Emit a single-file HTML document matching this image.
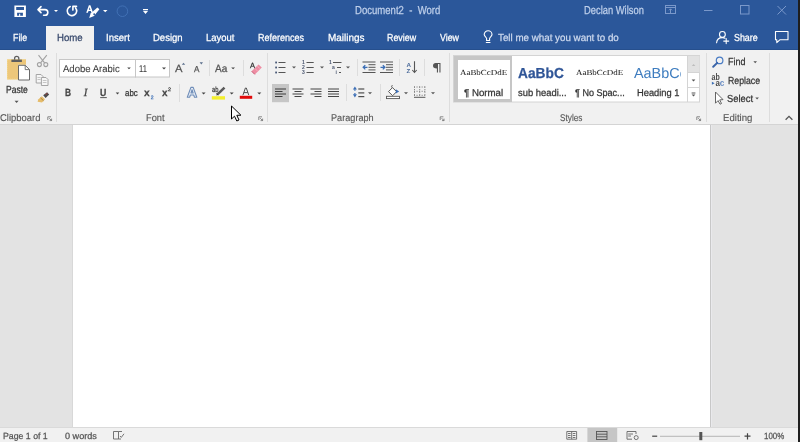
<!DOCTYPE html>
<html><head><meta charset="utf-8"><style>
html,body{margin:0;padding:0;width:800px;height:442px;overflow:hidden;background:#E3E3E3;font-family:"Liberation Sans",sans-serif}
.b{position:absolute}
.t{position:absolute;white-space:pre;transform-origin:0 0;text-rendering:geometricPrecision}
svg{position:absolute;left:0;top:0;will-change:transform}
</style></head><body>
<div class="b" style="left:0;top:0;width:800px;height:50px;background:#2B579A"></div>
<div class="b" style="left:0;top:49px;width:800px;height:1px;background:#264F8D"></div>
<div class="b" style="left:46px;top:26px;width:48px;height:24px;background:#F1F1F1"></div>
<div class="b" style="left:0;top:50px;width:800px;height:74px;background:#F1F1F1"></div>
<div class="b" style="left:0;top:124px;width:800px;height:1px;background:#D4D4D4"></div>
<div class="b" style="left:0;top:125px;width:800px;height:302px;background:#E3E3E3"></div>
<div class="b" style="left:73px;top:125px;width:637px;height:302px;background:#FFFFFF"></div>
<div class="b" style="left:72px;top:125px;width:1px;height:302px;background:#D8D8D8"></div>
<div class="b" style="left:710px;top:125px;width:1px;height:302px;background:#C8C8C8"></div>
<div class="b" style="left:711px;top:125px;width:1px;height:302px;background:#E9E9EC"></div>
<div class="b" style="left:0;top:427px;width:800px;height:15px;background:#F1F1F1"></div>
<div class="b" style="left:0;top:427px;width:800px;height:1px;background:#DADADA"></div>
<div class="b" style="left:798px;top:0;width:2px;height:442px;background:#1E1E1E"></div>
<svg width="800" height="442" viewBox="0 0 800 442" shape-rendering="geometricPrecision">
<!-- ===== Title bar ===== -->
<g fill="#FFFFFF">
 <path d="M14.4 5.5H25.9V17H14.4z M16.2 6.9V10.1H24V6.9z M17.1 12.8V15.7H19.1V13.8H20.2V15.7H22.9V12.8z" fill-rule="evenodd"/>
</g>
<g fill="none" stroke="#FFFFFF" stroke-width="1.6" stroke-linecap="round" stroke-linejoin="round">
 <path d="M41 6.6 L38 9.6 L41 12.6 M38.3 9.6 H45 A2.8 2.8 0 0 1 45 15.2 H43.6"/>
 <path d="M72.9 10.1 V6.4 H76.5"/>
 <path d="M75.6 7.9 A4.7 4.7 0 1 1 70.2 6.5" />
</g>
<path d="M54 10h4l-2 2z M103 10h4.5l-2.25 2.2z" fill="#FFFFFF"/>
<!-- A with brush -->
<path d="M86.2 12.8 L88.9 5.3 H90.4 L93.1 12.8 H91.4 L90.8 11 H88.5 L87.9 12.8z M88.9 9.7 H90.4 L89.65 7.3z" fill="#FFFFFF" fill-rule="evenodd"/>
<path d="M97.4 7.4 L99.4 9.3 L94 16 L89.2 18 L90.6 13.4z" fill="#FFFFFF"/>
<circle cx="94.2" cy="14.2" r="0.95" fill="#2B579A"/>
<circle cx="122.4" cy="11.2" r="5.3" fill="none" stroke="#4474B8" stroke-width="0.9"/>
<path d="M143 9h5v1.2h-5z M143 11h5l-2.5 2.9z" fill="#FFFFFF"/>
<!-- right controls -->
<g fill="none" stroke="#7A98CA" stroke-width="1">
 <rect x="665.5" y="5.5" width="10" height="8"/>
 <path d="M665.5 7.5 H675.5 M670.5 13 V9 M669 10.3 L670.5 8.8 L672 10.3"/>
 <path d="M704 10.5 H712.5"/>
 <rect x="740.5" y="5.5" width="8.5" height="8.5"/>
 <path d="M777.5 6 L786 14.5 M786 6 L777.5 14.5"/>
</g>
<!-- tab bar icons -->
<g fill="none" stroke="#FFFFFF" stroke-width="1.1" stroke-linecap="round">
 <path d="M486.6 40.5 V38.6 C486.6 37.3 484.2 36.3 484.2 34.6 A3.9 3.9 0 0 1 492 34.6 C492 36.3 489.6 37.3 489.6 38.6 V40.5 Z"/>
 <path d="M486.3 42.5 H490"/>
 <circle cx="722.4" cy="34.4" r="2.9"/>
 <path d="M716.6 42.8 C716.8 39.5 719.2 37.6 722.4 37.6 C723.4 37.6 724.3 37.8 725 38.2"/>
 <path d="M726.2 38.6 V43.6 M723.7 41.1 H728.7"/>
 <path d="M775.5 31.5 H788 V39.8 H779.8 L776.8 42.6 V39.8 H775.5 Z" stroke-linejoin="round"/>
</g>

<!-- ===== Ribbon separators ===== -->
<g fill="#DDDDDD">
 <rect x="56" y="53" width="1" height="69"/>
 <rect x="267" y="53" width="1" height="69"/>
 <rect x="449" y="53" width="1" height="69"/>
 <rect x="706" y="53" width="1" height="69"/>
 <rect x="769" y="53" width="1" height="69"/>
 <rect x="209" y="60" width="1" height="16"/>
 <rect x="243" y="60" width="1" height="16"/>
 <rect x="179" y="84" width="1" height="18"/>
 <rect x="357" y="59" width="1" height="17"/>
 <rect x="399" y="59" width="1" height="17"/>
 <rect x="424" y="59" width="1" height="17"/>
 <rect x="346" y="84" width="1" height="17"/>
 <rect x="380" y="84" width="1" height="17"/>
</g>

<!-- ===== Clipboard ===== -->
<path d="M7 59.2 H26 V64.8 H18 V79.6 H7 Z" fill="#EDC77A"/>
<path d="M7.5 59.7 H25.5 M7.5 59.7 V79.2 H18" fill="none" stroke="#F6DF9A" stroke-width="0.8" stroke-dasharray="1 1"/>
<path d="M11.4 59.6 H21.9 V62 H11.4 Z" fill="#5F5F5F"/>
<path d="M14.6 59.8 V58.4 A2.1 2.1 0 0 1 18.8 58.4 V59.8" fill="none" stroke="#5F5F5F" stroke-width="1.3"/>
<path d="M18.5 65.3 H25.2 L29.5 69.6 V80 H18.5 Z" fill="#FFFFFF" stroke="#6A6A6A" stroke-width="1"/>
<path d="M25.2 65.3 V69.6 H29.5" fill="none" stroke="#6A6A6A" stroke-width="0.9"/>
<path d="M14.6 100.8 H18.6 L16.6 102.9z" fill="#555555"/>
<!-- scissors -->
<g fill="none" stroke="#A2A2A2" stroke-width="1.1">
 <path d="M38.5 55.2 L44.6 62.8 M46.8 55.2 L40.6 62.8"/>
 <circle cx="39.4" cy="64.6" r="2"/>
 <circle cx="45.8" cy="64.6" r="2"/>
</g>
<!-- copy -->
<g fill="#F6F6F6" stroke="#9C9C9C" stroke-width="0.9">
 <path d="M36.2 74.5 H41 L43 76.5 V83 H36.2 Z"/>
 <path d="M41.4 77.5 H46 L48 79.5 V85.5 H41.4 Z"/>
</g>
<g stroke="#B0B0B0" stroke-width="0.7"><path d="M37.5 77.5 H40.5 M37.5 79.5 H40.5 M42.8 80.5 H46.5 M42.8 82.5 H46.5"/></g>
<!-- format brush -->
<path d="M43.2 95.2 L47 92.2 L49.2 94.6 L45.6 98 Z" fill="#4A4A4A"/>
<path d="M41.8 96.2 L45 99.2 L42 102.6 L37.6 101.8 L38.2 99.6 Z" fill="#E6BC6A"/>
<path d="M40.5 97.8 L43.6 100.8" stroke="#9C7A3A" stroke-width="0.8"/>
<path d="M45.5 94.6 L47.4 93.4" stroke="#B04040" stroke-width="0.9"/>

<!-- ===== Font group ===== -->
<rect x="59.5" y="59.5" width="76" height="17.5" fill="#FFFFFF" stroke="#C6C6C6" stroke-width="1"/>
<rect x="135.5" y="59.5" width="34" height="17.5" fill="#FFFFFF" stroke="#C6C6C6" stroke-width="1"/>
<path d="M127.2 67.4 h3.6 l-1.8 1.9z M162 67.4 h4 l-2 2z M231.2 67.4 h3.8 l-1.9 1.9z" fill="#444444"/>
<path d="M181.8 64.8 L183.5 62.8 L185.2 64.8z" fill="#5B6F8C"/>
<path d="M199.6 62.3 H203 L201.3 64.4z" fill="#5B6F8C"/>
<path d="M115.7 92.6 h3.6 l-1.8 1.9z M201.6 92.6 h4 l-2 1.9z M229.7 92.6 h4 l-2 1.9z M257.3 92.6 h4 l-2 1.9z" fill="#444444"/>
<rect x="100.2" y="97.2" width="6.6" height="0.9" fill="#444444"/>
<!-- clear formatting -->
<path d="M251.6 71.2 L258.6 64.4 L261.8 67.6 L254.8 74.4 Z" fill="#EE8CA2"/>
<path d="M251.6 71.2 L254.8 74.4" stroke="#C45C78" stroke-width="1"/>
<path d="M255 68.5 L257.5 71 M257.4 66.2 L259.9 68.7" stroke="#F6C2CE" stroke-width="0.7"/>
<!-- text effects -->
<path d="M187.3 97.3 L190.9 87.4 H193.2 L196.8 97.3 H194.5 L193.7 95 H190.4 L189.6 97.3 Z M191 93 H193.1 L192 89.8 Z" fill="#E8EEF6" stroke="#6F8DB8" stroke-width="1.1" fill-rule="evenodd" stroke-linejoin="round"/>
<!-- highlight -->
<path d="M223.6 86.8 L225.4 88.6 L218.6 95 L216.2 95.6 L216.8 93.2 Z" fill="#5A5A5A"/>
<path d="M216.6 93.6 L218.2 95.2" stroke="#333333" stroke-width="1"/>
<rect x="211.8" y="96.2" width="13.2" height="3.4" fill="#F2EE2E"/>
<!-- font color -->
<path d="M242.9 95.2 L245.4 88 H246.3 L248.8 95.2 M243.9 92.6 H247.8" fill="none" stroke="#505050" stroke-width="1"/>
<rect x="239.8" y="95.8" width="12.4" height="3" fill="#E00A0A"/>

<!-- ===== Paragraph group ===== -->
<g fill="#555555">
 <!-- bullets -->
 <rect x="275.2" y="61.6" width="1.8" height="1.8" fill="#4A5A78"/><rect x="275.2" y="66.6" width="1.8" height="1.8" fill="#4A5A78"/><rect x="275.2" y="71.6" width="1.8" height="1.8" fill="#4A5A78"/>
 <rect x="278.5" y="62" width="7" height="1"/><rect x="278.5" y="67" width="7" height="1"/><rect x="278.5" y="72" width="7" height="1"/>
 <path d="M292 66.6 h4 l-2 2z M320 66.6 h4 l-2 2z M346 66.6 h4 l-2 2z M368 92.2 h4 l-2 2z M404 92.2 h4 l-2 2z M431 92.2 h4 l-2 2z"/>
 <!-- numbering -->
 <rect x="306.5" y="62" width="7.2" height="1"/><rect x="306.5" y="67" width="7.2" height="1"/><rect x="306.5" y="72" width="7.2" height="1"/>
 <!-- multilevel -->
 <rect x="333" y="62" width="8.5" height="1"/><rect x="337" y="67" width="4" height="1"/><rect x="339" y="72" width="2" height="1"/>
</g>
<g fill="#4A5670" font-family="Liberation Sans" font-size="5" font-weight="700">
 <text x="302" y="64.4">1</text><text x="302" y="69.4">2</text><text x="302" y="74.4">3</text>
 <text x="329" y="64.4">1</text><text x="332" y="69.4">a</text><text x="335.5" y="74.4">i</text>
</g>
<!-- align selected bg -->
<rect x="272" y="84" width="17" height="18.2" fill="#C6C6C6"/>
<g fill="#3A3A3A">
 <rect x="275" y="88.5" width="11" height="1"/><rect x="275" y="91" width="7.5" height="1"/><rect x="275" y="93.5" width="11" height="1"/><rect x="275" y="96" width="7.5" height="1"/>
</g>
<g fill="#454545">
 <rect x="292.5" y="88.5" width="11" height="1"/><rect x="294.5" y="91" width="7" height="1"/><rect x="292.5" y="93.5" width="11" height="1"/><rect x="294.5" y="96" width="7" height="1"/>
 <rect x="310.5" y="88.5" width="11" height="1"/><rect x="314.5" y="91" width="7" height="1"/><rect x="310.5" y="93.5" width="11" height="1"/><rect x="314.5" y="96" width="7" height="1"/>
 <rect x="328" y="88.5" width="11" height="1"/><rect x="328" y="91" width="11" height="1"/><rect x="328" y="93.5" width="11" height="1"/><rect x="328" y="96" width="11" height="1"/>
</g>
<!-- indents -->
<g fill="#555555">
 <rect x="362.5" y="61.5" width="13" height="1"/><rect x="368.5" y="64.2" width="7" height="1"/><rect x="368.5" y="66.8" width="7" height="1"/><rect x="368.5" y="69.4" width="7" height="1"/><rect x="362.5" y="72" width="13" height="1"/>
 <rect x="380" y="61.5" width="13" height="1"/><rect x="386" y="64.2" width="7" height="1"/><rect x="386" y="66.8" width="7" height="1"/><rect x="386" y="69.4" width="7" height="1"/><rect x="380" y="72" width="13" height="1"/>
</g>
<g fill="none" stroke="#3C6FB6" stroke-width="1.3">
 <path d="M367.5 67.3 H363.3 M365.3 65.2 L363.2 67.3 L365.3 69.4"/>
 <path d="M380.5 67.3 H384.8 M382.8 65.2 L384.9 67.3 L382.8 69.4"/>
</g>
<!-- sort -->
<text x="406.5" y="67" font-family="Liberation Sans" font-size="6.2" font-weight="700" fill="#4A6A9A">A</text>
<text x="406.5" y="73.4" font-family="Liberation Sans" font-size="6.2" font-weight="700" fill="#4A6A9A">Z</text>
<path d="M414.5 61.2 V72.5 M412.3 70 L414.5 72.5 L416.7 70" fill="none" stroke="#555555" stroke-width="1.1"/>
<!-- pilcrow -->
<path d="M435.5 63 H440.5 V72.5 H439.4 V64.1 H438 V72.5 H436.9 V68.6 C434.2 68.6 433 67.5 433 65.8 C433 64 434.2 63 435.5 63 Z" fill="#555555"/>
<!-- line spacing -->
<g fill="#4E4E4E"><rect x="358.3" y="88.4" width="6" height="1.2"/><rect x="358.3" y="92.3" width="6" height="1.2"/><rect x="358.3" y="96" width="6" height="1.2"/></g>
<path d="M352.9 89.6 L354.9 86.6 L356.9 89.6z M352.9 94.2 L354.9 97.4 L356.9 94.2z" fill="#3C6FB6"/>
<rect x="354.3" y="89.2" width="1.2" height="1.6" fill="#3C6FB6"/><rect x="354.3" y="93" width="1.2" height="1.6" fill="#3C6FB6"/>
<!-- shading -->
<path d="M388.5 91.6 L392.5 87.6 L396.6 91.7 L392.6 95.7 Z" fill="#FFFFFF" stroke="#555555" stroke-width="1"/>
<path d="M392.3 87.8 C391 86.2 391.5 85.3 392.7 85.7" fill="none" stroke="#555555" stroke-width="0.9"/>
<path d="M395.8 89.2 L399.2 91.4 L395.8 93.6z" fill="#3C6FB6"/>
<rect x="386.5" y="96.3" width="13" height="2.3" fill="#FFFFFF" stroke="#555555" stroke-width="0.9"/>
<!-- borders -->
<g fill="none" stroke="#6A6A6A" stroke-width="0.9" stroke-dasharray="1 1.55">
 <path d="M414 87 H425.5 M414 91.3 H425.5 M414 95.3 H425.5"/>
 <path d="M414.5 86.6 V96 M419.7 86.6 V96 M424.9 86.6 V96"/>
</g>
<rect x="414" y="96.8" width="11.4" height="1" fill="#555555"/>
<!-- dialog launchers -->
<g fill="none" stroke="#6E6E6E" stroke-width="0.8">
 <path d="M47.8 120 V116.8 H51 M49.2 118.2 L51.6 120.6 M51.6 118.6 V120.6 H49.6"/>
 <path d="M258.8 120 V116.8 H262 M260.2 118.2 L262.6 120.6 M262.6 118.6 V120.6 H260.6"/>
 <path d="M440.2 120 V116.8 H443.4 M441.6 118.2 L444 120.6 M444 118.6 V120.6 H442"/>
 <path d="M696.8 120 V116.8 H700 M698.2 118.2 L700.6 120.6 M700.6 118.6 V120.6 H698.6"/>
</g>

<!-- ===== Styles gallery ===== -->
<rect x="453.5" y="55.5" width="246" height="46.5" fill="#FFFFFF" stroke="#D4D4D4" stroke-width="1"/>
<path d="M454 56 H512 V102 H454 Z M458 60 V99 H510 V60 Z" fill="#C6C6C6" fill-rule="evenodd"/>
<rect x="687.5" y="56" width="12" height="16.5" fill="#E2E2E2"/>
<path d="M687.5 56 V102 M687.5 72.5 H699.5 M687.5 87.5 H699.5" stroke="#D4D4D4" stroke-width="1"/>
<path d="M691.8 66 L693.6 64 L695.4 66z" fill="#BDBDBD"/>
<path d="M691.6 79.4 h3.8 l-1.9 2z" fill="#555555"/>
<path d="M691.6 92.6 h3.8 v0.9 h-3.8z M691.6 94.6 h3.8 l-1.9 2z" fill="#555555"/>

<!-- ===== Editing ===== -->
<g fill="none" stroke="#4A7CC4" stroke-width="1.2">
 <circle cx="719.6" cy="60.4" r="3.3"/>
 <path d="M717.2 62.9 L713.2 66.8" stroke="#3A64A8" stroke-width="2" stroke-linecap="round"/>
</g>
<path d="M753.4 61.3 h3.6 l-1.8 1.9z M755.3 97.6 h3.6 l-1.8 1.9z" fill="#555555"/>
<text x="711.6" y="80.2" font-family="Liberation Sans" font-size="8.2" font-weight="700" fill="#4A4A4A" textLength="8.2" lengthAdjust="spacingAndGlyphs">ab</text>
<text x="715.4" y="85.8" font-family="Liberation Sans" font-size="8.2" font-weight="700" fill="#4A4A4A" textLength="4.4" lengthAdjust="spacingAndGlyphs">a</text>
<text x="719.8" y="85.8" font-family="Liberation Sans" font-size="8.2" font-weight="700" fill="#6C8FC4" textLength="4.6" lengthAdjust="spacingAndGlyphs">c</text>
<path d="M711.9 81.8 L714.6 83.3 L711.9 84.8z" fill="#3C6FB6"/>
<path d="M715.5 92 V103.2 L718.1 100.6 L720 104.2 L721.5 103.5 L719.7 99.9 L723 99.6 Z" fill="#FFFFFF" stroke="#555555" stroke-width="0.9" stroke-linejoin="round"/>
<path d="M785.6 119.8 L789 116.4 L792.4 119.8" fill="none" stroke="#555555" stroke-width="1.3"/>

<!-- ===== Status bar ===== -->
<g fill="none" stroke="#666666" stroke-width="0.9">
 <path d="M113.5 431.5 H118.5 V439 H113.5 Z M118.5 431.5 H122 M118.5 439 H121"/>
 <path d="M120 436 L121.3 437.4 L124 433.8"/>
 <path d="M566.8 431.5 H576.6 V439.2 H566.8 Z M571.7 431.5 V439.2 M568 433.5 H570.6 M568 435.5 H570.6 M568 437.5 H570.6 M572.8 433.5 H575.4 M572.8 435.5 H575.4 M572.8 437.5 H575.4"/>
 <path d="M627 431.5 H636 V434 M627 431.5 V439.2 H632 M628.2 434 H633 M628.2 436 H631"/>
 <circle cx="636.2" cy="437.6" r="2"/>
</g>
<rect x="587.4" y="428" width="29.8" height="14" fill="#C6C6C6"/>
<g fill="none" stroke="#555555" stroke-width="0.9">
 <rect x="596.5" y="431.5" width="10.5" height="8"/>
 <path d="M596.5 434.2 H607 M596.5 436.8 H607"/>
</g>
<rect x="652.2" y="435.6" width="5" height="1.2" fill="#444444"/>
<rect x="660" y="435.8" width="80" height="1" fill="#B5B5B5"/>
<rect x="699.3" y="432" width="3" height="8.2" fill="#555555"/>
<path d="M744.5 436.2 H750.5 M747.5 433.2 V439.4" stroke="#444444" stroke-width="1.2"/>

<!-- ===== Cursor ===== -->
<path d="M231.5 106 V119 L234.5 116.2 L236.8 121 L239 120 L236.8 115.3 L240.9 115.2 Z" fill="#FFFFFF" stroke="#000000" stroke-width="1" stroke-linejoin="miter"/>
</svg>

<div class="b" style="left:0;top:0;width:800px;height:442px;will-change:transform">
<span class="t" style="left:355.00px;top:4.70px;font-size:11.6px;line-height:11.6px;color:#BFD0EB;font-weight:400;font-family:'Liberation Sans';-webkit-text-stroke:0.25px #BFD0EB;transform:scaleX(0.8246)">Document2  -  Word</span>
<span class="t" style="left:584.00px;top:4.70px;font-size:11.6px;line-height:11.6px;color:#BFD0EB;font-weight:400;font-family:'Liberation Sans';-webkit-text-stroke:0.25px #BFD0EB;transform:scaleX(0.8079)">Declan Wilson</span>
<span class="t" style="left:13.00px;top:34.40px;font-size:10.2px;line-height:10.2px;color:#FFFFFF;font-weight:400;font-family:'Liberation Sans';-webkit-text-stroke:0.25px #FFFFFF;transform:scaleX(0.8657)">File</span>
<span class="t" style="left:57.00px;top:34.40px;font-size:10.2px;line-height:10.2px;color:#36476A;font-weight:400;font-family:'Liberation Sans';-webkit-text-stroke:0.25px #36476A;transform:scaleX(0.9451)">Home</span>
<span class="t" style="left:106.00px;top:34.40px;font-size:10.2px;line-height:10.2px;color:#FFFFFF;font-weight:400;font-family:'Liberation Sans';-webkit-text-stroke:0.25px #FFFFFF;transform:scaleX(0.9357)">Insert</span>
<span class="t" style="left:153.00px;top:34.40px;font-size:10.2px;line-height:10.2px;color:#FFFFFF;font-weight:400;font-family:'Liberation Sans';-webkit-text-stroke:0.25px #FFFFFF;transform:scaleX(0.9341)">Design</span>
<span class="t" style="left:205.50px;top:34.40px;font-size:10.2px;line-height:10.2px;color:#FFFFFF;font-weight:400;font-family:'Liberation Sans';-webkit-text-stroke:0.25px #FFFFFF;transform:scaleX(0.9266)">Layout</span>
<span class="t" style="left:258.00px;top:34.40px;font-size:10.2px;line-height:10.2px;color:#FFFFFF;font-weight:400;font-family:'Liberation Sans';-webkit-text-stroke:0.25px #FFFFFF;transform:scaleX(0.8846)">References</span>
<span class="t" style="left:327.50px;top:34.40px;font-size:10.2px;line-height:10.2px;color:#FFFFFF;font-weight:400;font-family:'Liberation Sans';-webkit-text-stroke:0.25px #FFFFFF;transform:scaleX(0.9792)">Mailings</span>
<span class="t" style="left:387.00px;top:34.40px;font-size:10.2px;line-height:10.2px;color:#FFFFFF;font-weight:400;font-family:'Liberation Sans';-webkit-text-stroke:0.25px #FFFFFF;transform:scaleX(0.8724)">Review</span>
<span class="t" style="left:440.00px;top:34.40px;font-size:10.2px;line-height:10.2px;color:#FFFFFF;font-weight:400;font-family:'Liberation Sans';-webkit-text-stroke:0.25px #FFFFFF;transform:scaleX(0.8651)">View</span>
<span class="t" style="left:497.50px;top:34.40px;font-size:10.2px;line-height:10.2px;color:#CDD9EE;font-weight:400;font-family:'Liberation Sans';-webkit-text-stroke:0.25px #CDD9EE;transform:scaleX(0.9608)">Tell me what you want to do</span>
<span class="t" style="left:734.00px;top:34.40px;font-size:10.2px;line-height:10.2px;color:#FFFFFF;font-weight:400;font-family:'Liberation Sans';-webkit-text-stroke:0.25px #FFFFFF;transform:scaleX(0.8721)">Share</span>
<span class="t" style="left:6.00px;top:86.40px;font-size:10.2px;line-height:10.2px;color:#333333;font-weight:400;font-family:'Liberation Sans';-webkit-text-stroke:0.25px #333333;transform:scaleX(0.8338)">Paste</span>
<span class="t" style="left:0.00px;top:113.60px;font-size:9.8px;line-height:9.8px;color:#555555;font-weight:400;font-family:'Liberation Sans';-webkit-text-stroke:0.12px #555555;transform:scaleX(0.9642)">Clipboard</span>
<span class="t" style="left:62.50px;top:64.60px;font-size:9.8px;line-height:9.8px;color:#3A3A3A;font-weight:400;font-family:'Liberation Sans';-webkit-text-stroke:0.08px #3A3A3A;transform:scaleX(0.9725)">Adobe Arabic</span>
<span class="t" style="left:139.00px;top:64.60px;font-size:9.8px;line-height:9.8px;color:#3A3A3A;font-weight:400;font-family:'Liberation Sans';-webkit-text-stroke:0.08px #3A3A3A;transform:scaleX(0.7715)">11</span>
<span class="t" style="left:146.00px;top:113.60px;font-size:9.8px;line-height:9.8px;color:#555555;font-weight:400;font-family:'Liberation Sans';-webkit-text-stroke:0.12px #555555;transform:scaleX(0.9456)">Font</span>
<span class="t" style="left:215.20px;top:63.70px;font-size:10.6px;line-height:10.6px;color:#555555;font-weight:400;font-family:'Liberation Sans';-webkit-text-stroke:0.25px #555555;transform:scaleX(0.9490)">Aa</span>
<span class="t" style="left:330.75px;top:113.60px;font-size:9.8px;line-height:9.8px;color:#555555;font-weight:400;font-family:'Liberation Sans';-webkit-text-stroke:0.12px #555555;transform:scaleX(0.9326)">Paragraph</span>
<span class="t" style="left:560.00px;top:113.60px;font-size:9.8px;line-height:9.8px;color:#555555;font-weight:400;font-family:'Liberation Sans';-webkit-text-stroke:0.12px #555555;transform:scaleX(0.8402)">Styles</span>
<span class="t" style="left:722.60px;top:113.60px;font-size:9.8px;line-height:9.8px;color:#555555;font-weight:400;font-family:'Liberation Sans';-webkit-text-stroke:0.12px #555555;transform:scaleX(0.9828)">Editing</span>
<span class="t" style="left:459.80px;top:68.60px;font-size:7.8px;line-height:7.8px;color:#111111;font-weight:400;font-family:'Liberation Serif';transform:scaleX(1.1455)">AaBbCcDdE</span>
<span class="t" style="left:463.80px;top:88.60px;font-size:9.8px;line-height:9.8px;color:#333333;font-weight:400;font-family:'Liberation Sans';-webkit-text-stroke:0.25px #333333;transform:scaleX(0.9904)">¶ Normal</span>
<span class="t" style="left:518.30px;top:67.45px;font-size:14.5px;line-height:14.5px;color:#2F5597;font-weight:700;font-family:'Liberation Sans';-webkit-text-stroke:0.25px #2F5597;transform:scaleX(0.9475)">AaBbC</span>
<span class="t" style="left:517.50px;top:88.60px;font-size:9.8px;line-height:9.8px;color:#333333;font-weight:400;font-family:'Liberation Sans';-webkit-text-stroke:0.25px #333333;transform:scaleX(0.9593)">sub headi...</span>
<span class="t" style="left:576.00px;top:68.60px;font-size:7.8px;line-height:7.8px;color:#111111;font-weight:400;font-family:'Liberation Serif';transform:scaleX(1.1455)">AaBbCcDdE</span>
<span class="t" style="left:575.30px;top:88.60px;font-size:9.8px;line-height:9.8px;color:#333333;font-weight:400;font-family:'Liberation Sans';-webkit-text-stroke:0.25px #333333;transform:scaleX(0.9245)">¶ No Spac...</span>
<div class="b" style="left:455px;top:57px;width:226px;height:43px;overflow:hidden"><span class="t" style="left:179.40px;top:9.75px;font-size:14.5px;line-height:14.5px;color:#3D7CBF;font-weight:400;font-family:'Liberation Sans';transform:scaleX(0.9935)">AaBbCc</span></div>
<span class="t" style="left:636.50px;top:88.60px;font-size:9.8px;line-height:9.8px;color:#333333;font-weight:400;font-family:'Liberation Sans';-webkit-text-stroke:0.25px #333333;transform:scaleX(0.9521)">Heading 1</span>
<span class="t" style="left:727.50px;top:58.40px;font-size:10.2px;line-height:10.2px;color:#333333;font-weight:400;font-family:'Liberation Sans';-webkit-text-stroke:0.25px #333333;transform:scaleX(0.8833)">Find</span>
<span class="t" style="left:727.50px;top:76.90px;font-size:10.2px;line-height:10.2px;color:#333333;font-weight:400;font-family:'Liberation Sans';-webkit-text-stroke:0.25px #333333;transform:scaleX(0.8565)">Replace</span>
<span class="t" style="left:727.20px;top:95.40px;font-size:10.2px;line-height:10.2px;color:#333333;font-weight:400;font-family:'Liberation Sans';-webkit-text-stroke:0.25px #333333;transform:scaleX(0.9198)">Select</span>
<span class="t" style="left:2.60px;top:431.90px;font-size:9.0px;line-height:9.0px;color:#555555;font-weight:400;font-family:'Liberation Sans';-webkit-text-stroke:0.25px #555555;transform:scaleX(0.9711)">Page 1 of 1</span>
<span class="t" style="left:64.80px;top:431.90px;font-size:9.0px;line-height:9.0px;color:#555555;font-weight:400;font-family:'Liberation Sans';-webkit-text-stroke:0.25px #555555;transform:scaleX(1.0121)">0 words</span>
<span class="t" style="left:764.00px;top:431.50px;font-size:9.0px;line-height:9.0px;color:#555555;font-weight:400;font-family:'Liberation Sans';-webkit-text-stroke:0.25px #555555;transform:scaleX(0.8776)">100%</span>
<span class="t" style="left:64.75px;top:87.95px;font-size:10.5px;line-height:10.5px;color:#444444;font-weight:700;font-family:'Liberation Sans';-webkit-text-stroke:0.25px #444444;transform:scaleX(0.7937)">B</span>
<span class="t" style="left:83.75px;top:87.70px;font-size:11px;line-height:11px;color:#444444;font-style:italic;font-weight:400;font-family:'Liberation Serif';-webkit-text-stroke:0.25px #444444;transform:scaleX(1.0000)">I</span>
<span class="t" style="left:100.40px;top:89.40px;font-size:10.2px;line-height:10.2px;color:#444444;font-weight:700;font-family:'Liberation Sans';-webkit-text-stroke:0.25px #444444;transform:scaleX(0.8571)">U</span>
<span class="t" style="left:125.10px;top:89.35px;font-size:9.3px;line-height:9.3px;color:#333333;font-weight:400;font-family:'Liberation Sans';-webkit-text-stroke:0.25px #333333;transform:scaleX(0.8474)">abc</span>
<span class="t" style="left:144.25px;top:88.70px;font-size:10px;line-height:10px;color:#444444;font-weight:700;font-family:'Liberation Sans';-webkit-text-stroke:0.25px #444444;transform:scaleX(1.0250)">x</span>
<span class="t" style="left:150.80px;top:96.10px;font-size:5px;line-height:5px;color:#3C6FB6;font-weight:400;font-family:'Liberation Sans';-webkit-text-stroke:0.25px #3C6FB6;transform:scaleX(1.0000)">2</span>
<span class="t" style="left:161.90px;top:88.70px;font-size:10px;line-height:10px;color:#444444;font-weight:700;font-family:'Liberation Sans';-webkit-text-stroke:0.25px #444444;transform:scaleX(1.0000)">x</span>
<span class="t" style="left:168.30px;top:87.70px;font-size:5px;line-height:5px;color:#333333;font-weight:400;font-family:'Liberation Sans';-webkit-text-stroke:0.25px #333333;transform:scaleX(1.0667)">2</span>
<span class="t" style="left:175.00px;top:64.15px;font-size:10.5px;line-height:10.5px;color:#555555;font-weight:400;font-family:'Liberation Sans';-webkit-text-stroke:0.25px #555555;transform:scaleX(1.0714)">A</span>
<span class="t" style="left:193.75px;top:65.10px;font-size:8.6px;line-height:8.6px;color:#555555;font-weight:400;font-family:'Liberation Sans';-webkit-text-stroke:0.25px #555555;transform:scaleX(0.9417)">A</span>
<span class="t" style="left:250.00px;top:61.75px;font-size:7.5px;line-height:7.5px;color:#333333;font-weight:400;font-family:'Liberation Sans';-webkit-text-stroke:0.25px #333333;transform:scaleX(1.0000)">A</span>
<span class="t" style="left:212.30px;top:85.70px;font-size:7.6px;line-height:7.6px;color:#3A3A3A;font-weight:400;font-family:'Liberation Sans';-webkit-text-stroke:0.25px #3A3A3A;transform:scaleX(0.7540)">ab</span>
</div>
</body></html>
